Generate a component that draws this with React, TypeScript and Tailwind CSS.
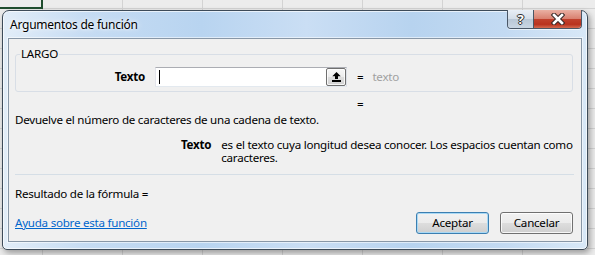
import React from "react";

function UploadIcon() {
  return (
    <svg width="9" height="10" viewBox="0 0 9 10">
      <polygon points="4.5,0 0.3,4.2 3,4.2 3,7 6,7 6,4.2 8.7,4.2" fill="#000" />
      <rect x="0" y="8" width="9" height="2" fill="#000" />
    </svg>
  );
}

function CloseIcon() {
  return (
    <svg width="14" height="12" viewBox="0 0 14 12">
      <path d="M3 2 L11 10 M11 2 L3 10" stroke="#3a2a28" strokeWidth="4.6" strokeLinecap="square" />
      <path d="M3 2 L11 10 M11 2 L3 10" stroke="#ffffff" strokeWidth="2.6" strokeLinecap="square" />
    </svg>
  );
}

export default function App() {
  return (
    <div className="relative w-[595px] h-[255px] overflow-hidden bg-[#ececec] bg-[linear-gradient(90deg,#d3d3d3_1px,transparent_1px),linear-gradient(#d3d3d3_1px,transparent_1px)] bg-[size:80px_20px] bg-[position:42px_0px,0px_8px] font-['Noto_Sans',sans-serif] text-[11.6px] tracking-[-0.25px] text-black">
      {/* selected cell border in the sheet behind */}
      <div className="absolute left-0 top-[7px] w-[42px] h-[2px] bg-[#1f4d2e]" />
      <div className="absolute left-[41px] top-0 w-[2px] h-[9px] bg-[#1f4d2e]" />

      {/* window */}
      <div className="ml-[2px] mt-[10px] w-[586px] h-[240px] flex flex-col rounded-t-[7px] rounded-b-[5px] border border-[#3d4b59] bg-[linear-gradient(90deg,#e2edf8_0%,#c6dcf3_14%,#b8d4f0_34%,#cadef4_52%,#b7d3ef_70%,#c3daf2_86%,#d8e8f7_100%)] shadow-[inset_0_0_0_1px_rgba(255,255,255,0.65),2px_3px_6px_rgba(0,0,0,0.35)]">
        {/* title bar */}
        <div className="flex h-[27px] items-start">
          <div className="flex h-[27px] flex-1 items-center pl-[7px] text-[12px] text-black [text-shadow:0_0_6px_#fff,0_0_3px_#fff]">
            Argumentos de función
          </div>
          <div className="mr-[5px] -mt-[1px] flex h-[19px] rounded-b-[4px] border border-t-0 border-[#4a5766] overflow-hidden shadow-[0_1px_0_rgba(255,255,255,0.6)]">
            <div className="flex w-[26px] items-center justify-center bg-[linear-gradient(#e8eef5_0%,#d3dde8_50%,#b9c7d6_51%,#c9d6e3_100%)] border-r border-[#4a5766] text-[13px] font-bold leading-none tracking-normal text-white [text-shadow:0_0_1px_#222,1px_0_0_#333,-1px_0_0_#333,0_1px_0_#333,0_-1px_0_#333]">
              ?
            </div>
            <div className="flex w-[47px] items-center justify-center bg-[linear-gradient(#eab0a3_0%,#d98170_48%,#c0402c_52%,#b9331f_80%,#d46a50_100%)]">
              <CloseIcon />
            </div>
          </div>
        </div>

        {/* client area */}
        <div className="mx-[5px] h-[204px] w-[574px] border border-[#8897a7] bg-[#f0f0f0] px-[6px] shadow-[0_0_0_1px_rgba(255,255,255,0.55)]">
          {/* group box */}
          <div className="relative mt-[15px] w-[558px] h-[38px] rounded-[3px] border border-[#d8dee6] pt-[12px]">
            <span className="absolute -top-[9px] left-[4px] bg-[#f0f0f0] px-[1px] leading-[16px]">LARGO</span>
            <div className="flex h-[20px] items-center">
              <div className="w-[129px] text-right font-bold leading-[16px]">Texto</div>
              <div className="ml-[10px] flex h-[20px] w-[192px] items-stretch border border-[#abadb3] border-b-[#e3e9ef] border-r-[#dbdfe6] border-l-[#e2e3ea] bg-white">
                <div className="ml-[3px] mt-[2px] h-[14px] w-px bg-black" />
                <div className="flex-1" />
                <div className="flex w-[20px] items-center justify-center rounded-[2px] border border-[#707070] bg-[linear-gradient(#f7f7f7_0%,#ececec_50%,#dddddd_51%,#d2d2d2_100%)] shadow-[inset_0_0_0_1px_rgba(255,255,255,0.8)]">
                  <UploadIcon />
                </div>
              </div>
              <span className="ml-[10px] leading-[16px]">=</span>
              <span className="ml-[9px] leading-[16px] text-[#a0a0a0]">texto</span>
            </div>
          </div>

          <div className="mt-[4px] h-[16px] pl-[342px] leading-[16px]">=</div>
          <div className="h-[16px] leading-[16px]">Devuelve el número de caracteres de una cadena de texto.</div>

          <div className="mt-[10px] flex">
            <div className="w-[197px] text-right font-bold leading-[13px]">Texto</div>
            <div className="ml-[10px] w-[355px] whitespace-nowrap">
              <div className="h-[13px] leading-[13px]">es el texto cuya longitud desea conocer. Los espacios cuentan como</div>
              <div className="h-[14px] leading-[13px]">caracteres.</div>
            </div>
          </div>

          <div className="mt-[9px] h-px w-[559px] bg-[#d5dee6]" />

          <div className="mt-[11px] h-[16px] leading-[16px]">Resultado de la fórmula =</div>

          <div className="mt-[10px] flex h-[22px] items-center pr-[2px]">
            <a className="flex-1 leading-[16px] text-[#0066cc] underline" href="#">
              Ayuda sobre esta función
            </a>
            <button className="flex h-[22px] w-[73px] items-center justify-center rounded-[3px] border border-[#3c7fb1] bg-[linear-gradient(#f2f2f2_0%,#ebebeb_50%,#dddddd_51%,#cfcfcf_100%)] shadow-[inset_0_0_0_1px_#a9d9f5]">
              Aceptar
            </button>
            <button className="ml-[11px] flex h-[22px] w-[73px] items-center justify-center rounded-[3px] border border-[#707070] bg-[linear-gradient(#f2f2f2_0%,#ebebeb_50%,#dddddd_51%,#cfcfcf_100%)] shadow-[inset_0_0_0_1px_rgba(255,255,255,0.8)]">
              Cancelar
            </button>
          </div>
        </div>
      </div>
    </div>
  );
}
